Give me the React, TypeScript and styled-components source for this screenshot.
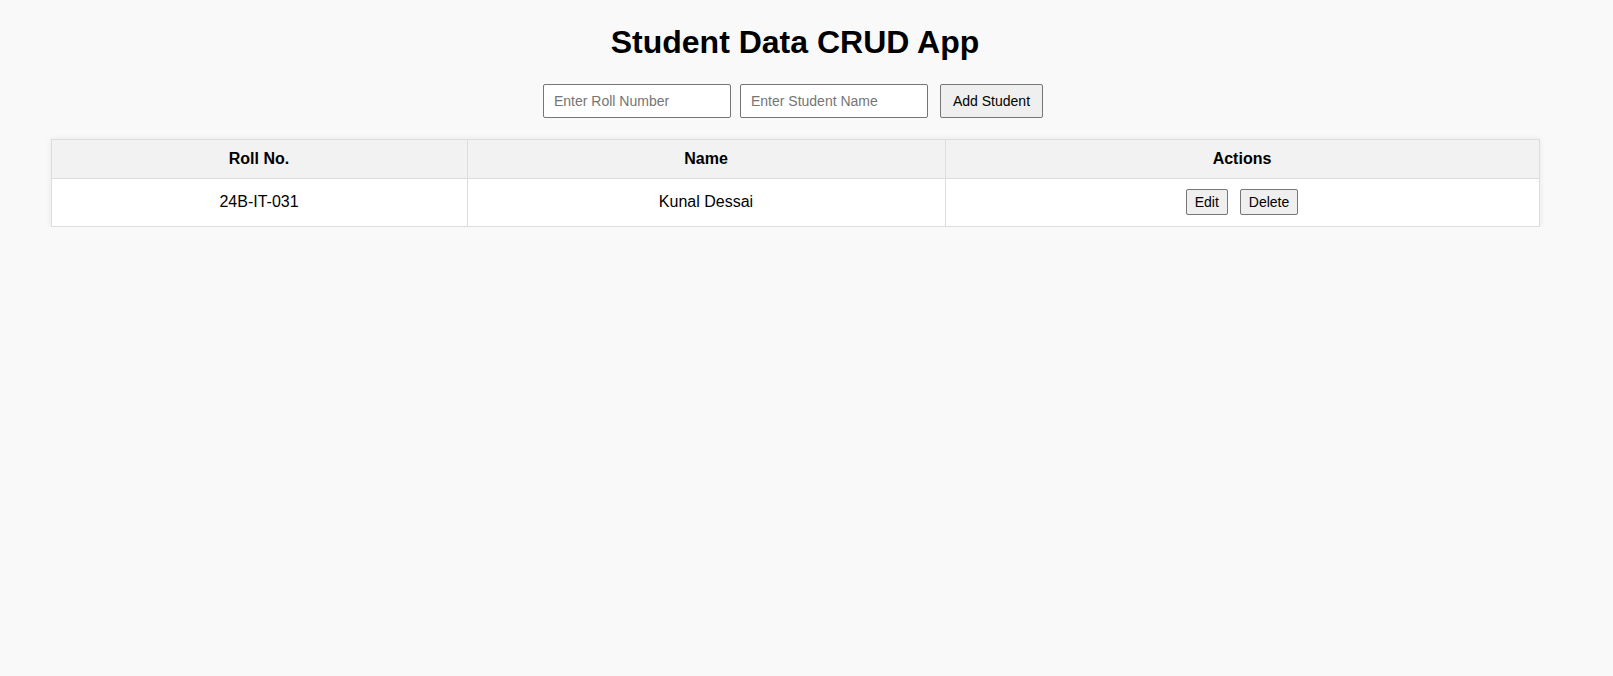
import React, { useState } from "react";
import styled, { createGlobalStyle } from "styled-components";

const GlobalStyle = createGlobalStyle`
  html, body {
    margin: 0;
    padding: 0;
    background: #f9f9f9;
    font-family: "Liberation Sans", Arial, sans-serif;
    color: #000;
  }
`;

const Page = styled.div`
  width: 1590px;
  padding-top: 24px;
  display: flex;
  flex-direction: column;
  align-items: center;
`;

const Title = styled.h1`
  margin: 0 0 23px 0;
  font-size: 32px;
  line-height: 37px;
  font-weight: 700;
  text-align: center;
`;

const Form = styled.div`
  display: flex;
  align-items: center;
  gap: 9px;
  margin: 0 4px 21px 0;
`;

const TextInput = styled.input`
  box-sizing: border-box;
  width: 188px;
  height: 34px;
  padding: 8px 10px;
  font-family: "Liberation Sans", Arial, sans-serif;
  font-size: 14px;
  border: 1px solid #767676;
  border-radius: 2px;
  background: #fff;
  color: #000;
  &::placeholder {
    color: #757575;
  }
`;

const Button = styled.button<{ $size?: "lg" | "sm" }>`
  box-sizing: border-box;
  font-family: "Liberation Sans", Arial, sans-serif;
  font-size: 14px;
  line-height: 16px;
  color: #000;
  background: #efefef;
  border: 1px solid #767676;
  border-radius: 2px;
  padding: ${(p) => (p.$size === "sm" ? "4px 8px" : "8px 12px")};
  height: ${(p) => (p.$size === "sm" ? "26px" : "34px")};
  margin-left: ${(p) => (p.$size === "sm" ? "0" : "3px")};
  cursor: pointer;
`;

const Table = styled.table`
  width: 1488px;
  table-layout: fixed;
  border-collapse: collapse;
  background: #fff;
  box-shadow: 0 0 6px rgba(0, 0, 0, 0.08);
`;

const Col = styled.col<{ $w: number }>`
  width: ${(p) => p.$w}px;
`;

const HeadCell = styled.th`
  background: #f2f2f2;
  border: 1px solid #dddddd;
  padding: 10px;
  font-size: 16px;
  line-height: 18px;
  font-weight: 700;
  text-align: center;
`;

const Cell = styled.td`
  border: 1px solid #dddddd;
  padding: 10px 10px 11px;
  font-size: 16px;
  line-height: 18px;
  text-align: center;
  vertical-align: middle;
`;

const Actions = styled.div`
  display: flex;
  justify-content: center;
  gap: 12px;
`;

type Student = { roll: string; name: string };

export default function App() {
  const [students] = useState<Student[]>([
    { roll: "24B-IT-031", name: "Kunal Dessai" },
  ]);
  return (
    <>
      <GlobalStyle />
      <Page>
        <Title>Student Data CRUD App</Title>
        <Form>
          <TextInput placeholder="Enter Roll Number" />
          <TextInput placeholder="Enter Student Name" />
          <Button>Add Student</Button>
        </Form>
        <Table>
          <colgroup>
            <Col $w={416} />
            <Col $w={478} />
            <Col $w={594} />
          </colgroup>
          <thead>
            <tr>
              <HeadCell>Roll No.</HeadCell>
              <HeadCell>Name</HeadCell>
              <HeadCell>Actions</HeadCell>
            </tr>
          </thead>
          <tbody>
            {students.map((s) => (
              <tr key={s.roll}>
                <Cell>{s.roll}</Cell>
                <Cell>{s.name}</Cell>
                <Cell>
                  <Actions>
                    <Button $size="sm">Edit</Button>
                    <Button $size="sm">Delete</Button>
                  </Actions>
                </Cell>
              </tr>
            ))}
          </tbody>
        </Table>
      </Page>
    </>
  );
}
